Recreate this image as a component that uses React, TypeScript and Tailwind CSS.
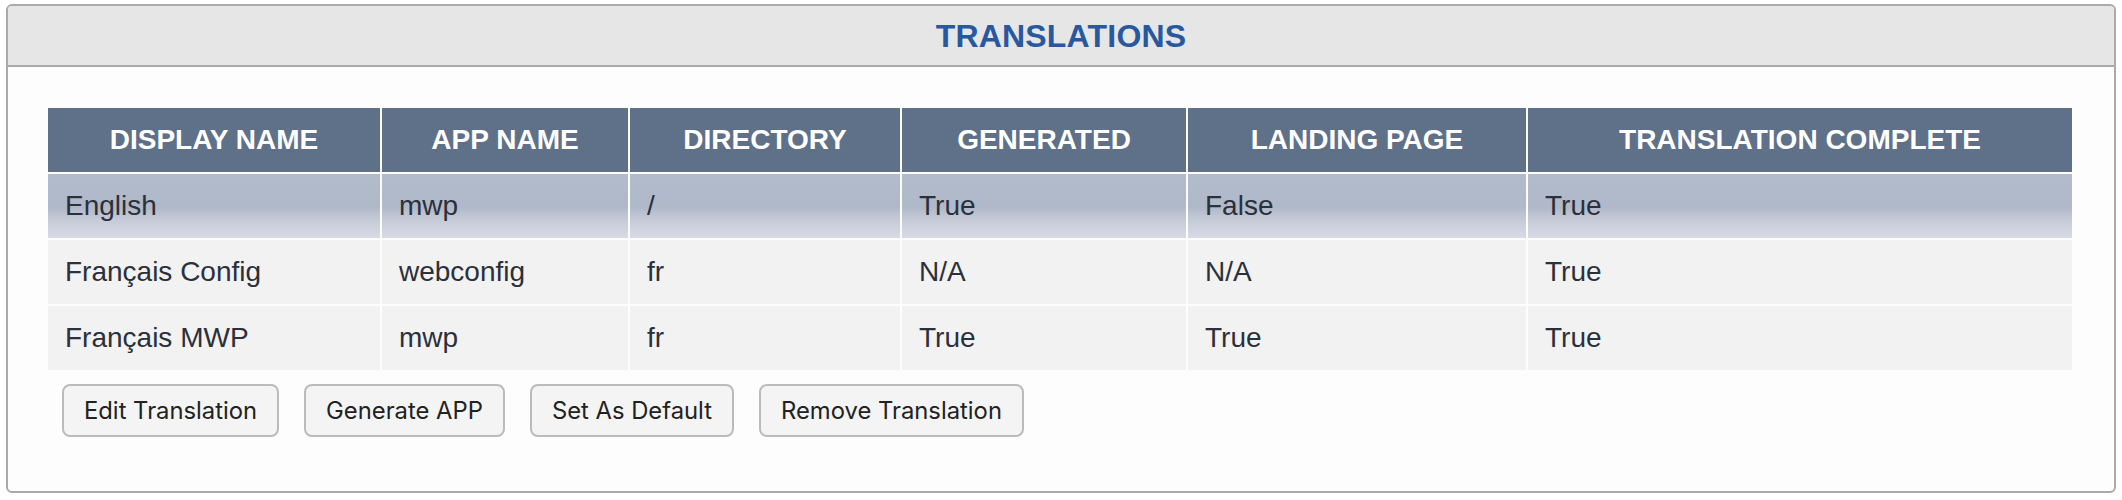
import React from "react";

type Row = {
  display: string;
  app: string;
  dir: string;
  generated: string;
  landing: string;
  complete: string;
};

const columns = [
  { label: "DISPLAY NAME", width: "w-[332px]" },
  { label: "APP NAME", width: "w-[246px]" },
  { label: "DIRECTORY", width: "w-[270px]" },
  { label: "GENERATED", width: "w-[284px]" },
  { label: "LANDING PAGE", width: "w-[338px]" },
  { label: "TRANSLATION COMPLETE", width: "w-[544px]" },
];

const rows: Row[] = [
  { display: "English", app: "mwp", dir: "/", generated: "True", landing: "False", complete: "True" },
  { display: "Français Config", app: "webconfig", dir: "fr", generated: "N/A", landing: "N/A", complete: "True" },
  { display: "Français MWP", app: "mwp", dir: "fr", generated: "True", landing: "True", complete: "True" },
];

const actions = ["Edit Translation", "Generate APP", "Set As Default", "Remove Translation"];

export default function App() {
  return (
    <div className="w-[2122px] h-[500px] bg-white pt-[4px] px-[6px] font-['Liberation_Sans',Arial,sans-serif]">
      <div className="h-[489px] border-2 border-[#aaaaaa] rounded-[6px] bg-[#fdfdfd] overflow-hidden">
        <div className="h-[61px] bg-[#e6e6e6] border-b-2 border-[#aaaaaa] flex items-center justify-center">
          <h1 className="text-[32px] font-bold text-[#2858a0] tracking-[0.2px]">TRANSLATIONS</h1>
        </div>

        <div className="pt-[39px] pl-[38px] pr-[40px]">
          <table className="w-full table-fixed border-separate border-spacing-[2px]">
            <thead>
              <tr>
                {columns.map(c => (
                  <th
                    key={c.label}
                    className={`${c.width} h-[64px] bg-[#5f7089] text-white font-bold text-[28px] text-center`}
                  >
                    {c.label}
                  </th>
                ))}
              </tr>
            </thead>
            <tbody>
              {rows.map((r, i) => (
                <TableRow key={r.display} row={r} selected={i === 0} />
              ))}
            </tbody>
          </table>

          <div className="flex mt-[12px] ml-[16px] gap-[25px]">
            {actions.map(a => (
              <button
                key={a}
                className="h-[53px] px-[20px] border-2 border-[#bbbbbb] rounded-[8px] bg-[#f4f4f4] text-[#222222] text-[23.8px] font-['Inter',sans-serif]"
              >
                {a}
              </button>
            ))}
          </div>
        </div>
      </div>
    </div>
  );
}

function TableRow({ row, selected }: { row: Row; selected: boolean }) {
  const cells = [row.display, row.app, row.dir, row.generated, row.landing, row.complete];
  const bg = selected
    ? "bg-[linear-gradient(to_bottom,#b2bbcb_0%,#b0b9c9_52%,#c6cbd8_72%,#d8dbe5_100%)]"
    : "bg-[#f2f2f2]";
  return (
    <tr>
      {cells.map((c, j) => (
        <td key={j} className={`${bg} h-[64px] px-[17px] text-[28px] text-[#2b303b] text-left`}>
          {c}
        </td>
      ))}
    </tr>
  );
}
